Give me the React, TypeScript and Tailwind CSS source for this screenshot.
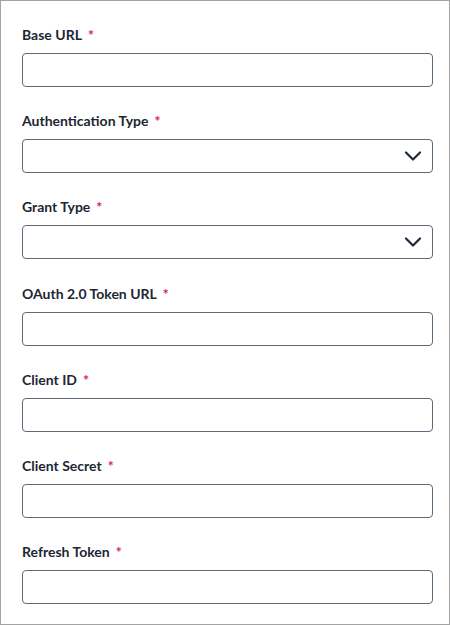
import React from "react";

interface IField {
  label: string;
  select?: boolean;
}

const fields: IField[] = [
  { label: "Base URL" },
  { label: "Authentication Type", select: true },
  { label: "Grant Type", select: true },
  { label: "OAuth 2.0 Token URL" },
  { label: "Client ID" },
  { label: "Client Secret" },
  { label: "Refresh Token" },
];

const Chevron = () => (
  <svg width="18" height="12" viewBox="0 0 18 12" fill="none" className="text-[#1f2a37]">
    <path d="M2 2.5 L9 9.5 L16 2.5" stroke="currentColor" strokeWidth="2.2" strokeLinecap="round" strokeLinejoin="round" />
  </svg>
);

const Field = ({ label, select }: IField) => (
  <div className="flex flex-col mb-[24.2px]">
    <label className="h-5 leading-5 text-[14px] font-bold text-[#1d2633] mb-2 flex items-center">
      {label}
      <span className="text-[#e0245e] ml-[6px] text-[14px] font-black">*</span>
    </label>
    <div className="relative h-[34px] rounded-[4px] border border-[#5c6b7a] bg-white">
      {select && (
        <div className="absolute right-[10px] top-0 h-full flex items-center">
          <Chevron />
        </div>
      )}
    </div>
  </div>
);

export default function App() {
  return (
    <div
      className="w-[450px] h-[625px] border border-[#a3a3a3] bg-white overflow-hidden"
      style={{ fontFamily: "Lato, 'Open Sans', sans-serif" }}
    >
      <div className="pt-[24px] pl-[21px] pr-[16px]">
        {fields.map((f) => (
          <Field key={f.label} {...f} />
        ))}
      </div>
    </div>
  );
}
